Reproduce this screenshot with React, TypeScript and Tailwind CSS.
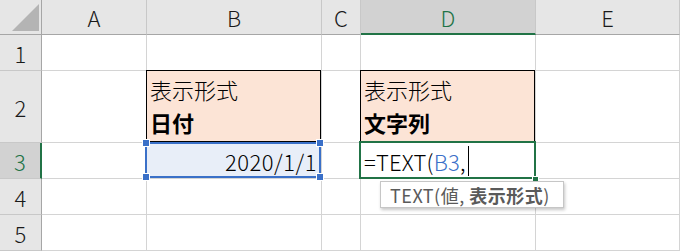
import clsx from 'clsx';

const cols = ['A', 'B', 'C', 'D', 'E'];

function Corner() {
  return (
    <div className="relative border-r border-b border-r-[#a6a6a6] border-b-[#a6a6a6] bg-[#e6e6e6]">
      <svg width="41" height="34" viewBox="0 0 41 34" className="absolute left-0 top-0">
        <polygon points="12,31 39,31 39,4" fill="#b4b4b4" />
      </svg>
    </div>
  );
}

function ColHead({ label }: { label: string }) {
  const active = label === 'D';
  return (
    <div
      className={clsx(
        'flex items-center justify-center border-r border-r-[#c8c8c8] text-[22px] font-light leading-none',
        active
          ? 'border-b-2 border-b-[#217346] bg-[#d2d2d2] text-[#217346]'
          : 'border-b border-b-[#a6a6a6] bg-[#e6e6e6] text-[#1a1a1a]'
      )}
    >
      {label}
    </div>
  );
}

function RowHead({ n }: { n: number }) {
  const active = n === 3;
  return (
    <div
      className={clsx(
        'flex items-center justify-center border-b border-b-[#c8c8c8] text-[22px] font-light leading-none',
        active
          ? 'border-r-2 border-r-[#217346] bg-[#d2d2d2] text-[#217346]'
          : 'border-r border-r-[#a6a6a6] bg-[#e6e6e6] text-[#1a1a1a]'
      )}
    >
      {n}
    </div>
  );
}

function Cell({
  className,
  bg = 'bg-white',
  children,
}: {
  className?: string;
  bg?: string;
  children?: React.ReactNode;
}) {
  return (
    <div className={clsx('relative border-r border-b border-[#d4d4d4]', bg, className)}>
      {children}
    </div>
  );
}

function Handle({ className }: { className: string }) {
  return <span className={clsx('absolute h-[6px] w-[6px] bg-[#3a70c8] outline outline-1 outline-white', className)} />;
}

function LabelCell({ value }: { value: string }) {
  return (
    <Cell bg="bg-[#fce4d6]">
      <div className="absolute left-[-1px] top-[-1px] right-0 bottom-0 border border-black" />
      <div className="relative flex h-full flex-col justify-end pb-[3px] pl-[3px] text-[22px] leading-[33px] text-black">
        <div className="font-light">表示形式</div>
        <div className="font-bold">{value}</div>
      </div>
    </Cell>
  );
}

export default function App() {
  return (
    <div className="h-[252px] w-[680px] overflow-hidden bg-white font-['Noto_Sans_CJK_JP','Noto_Sans',sans-serif]">
      <div className="grid grid-cols-[42px_105px_175px_39px_175px_144px] grid-rows-[35px_36px_72px_36px_36px_36px]">
        <Corner />
        {cols.map((c) => (
          <ColHead key={c} label={c} />
        ))}

        <RowHead n={1} />
        {cols.map((c) => (
          <Cell key={`1${c}`} />
        ))}

        <RowHead n={2} />
        <Cell />
        <LabelCell value="日付" />
        <Cell />
        <LabelCell value="文字列" />
        <Cell />

        <RowHead n={3} />
        <Cell />
        <Cell className="z-10" bg="bg-[#e8eef8]">
          <div className="flex h-full items-center justify-end pr-[4px] text-[22px] font-light leading-none tracking-[0.5px] text-black">
            2020/1/1
          </div>
          <div className="absolute left-[-2px] top-[-1px] right-0 bottom-0 border-2 border-[#3a70c8]" />
          <Handle className="left-[-4px] top-[-3px]" />
          <Handle className="right-[-2px] top-[-3px]" />
          <Handle className="left-[-4px] bottom-[-2px]" />
          <Handle className="right-[-2px] bottom-[-2px]" />
        </Cell>
        <Cell />
        <Cell className="z-20">
          <div className="flex h-full items-center pl-[3px] text-[22px] font-light leading-none tracking-[0.2px] text-black">
            <span>=TEXT(</span>
            <span className="text-[#3a70c8]">B3</span>
            <span>,</span>
            <span className="ml-[2px] h-[30px] w-px bg-black" />
          </div>
          <div className="absolute left-[-2px] top-[-2px] right-[-1px] bottom-[-1px] border-2 border-[#217346]" />
          <span className="absolute right-[-3px] bottom-[-4px] h-[5px] w-[5px] bg-[#217346] outline outline-1 outline-white" />
          <div className="absolute left-[19px] top-[38px] flex h-[27px] w-[184px] items-center whitespace-pre border border-[#c6c6c6] bg-white pl-[9px] text-[18px] leading-none tracking-[0.5px] text-[#5a5a5a] shadow-[1px_2px_3px_rgba(0,0,0,0.22)]">
            <span>
              TEXT(値, <span className="font-bold">表示形式</span>)
            </span>
          </div>
        </Cell>
        <Cell />

        <RowHead n={4} />
        {cols.map((c) => (
          <Cell key={`4${c}`} />
        ))}

        <RowHead n={5} />
        {cols.map((c) => (
          <Cell key={`5${c}`} />
        ))}
      </div>
    </div>
  );
}
